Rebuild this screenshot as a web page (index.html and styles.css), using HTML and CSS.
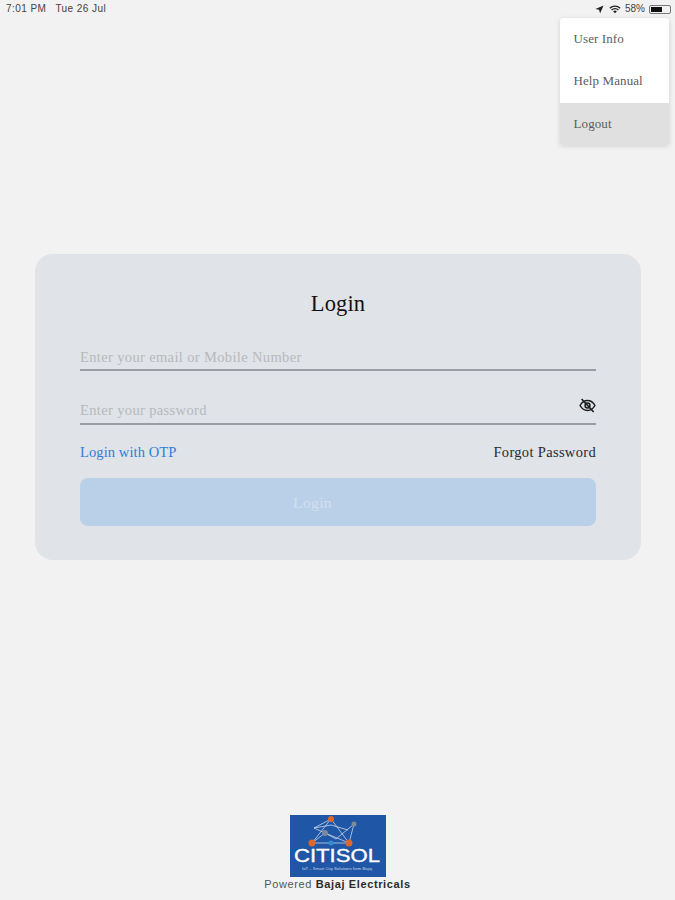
FILE: index.html
```html
<!DOCTYPE html>
<html lang="en">
<head>
<meta charset="utf-8">
<title>Login</title>
<link rel="stylesheet" href="styles.css">
</head>
<body>
<div class="page">
  <header class="status">
    <div class="status-left"><span>7:01 PM</span><span>Tue 26 Jul</span></div>
    <div class="status-right">
      <svg class="ic-loc" viewBox="0 0 10 10"><path d="M9.500.5 5.600 9.500 4.600 5.400.5 4.400z" fill="#222"/></svg>
      <svg class="ic-wifi" viewBox="0 0 14 10"><path d="M1 3.600a8.500 8.500 0 0 1 12 0M3 5.600a5.600 5.600 0 0 1 8 0" fill="none" stroke="#222" stroke-width="1.500"/><path d="M4.900 7.300a3 3 0 0 1 4.200 0L7 9.500z" fill="#222"/></svg>
      <span>58%</span>
      <div class="battery"><div class="battery-fill"></div></div>
    </div>
  </header>

  <nav class="menu">
    <div class="menu-item">User Info</div>
    <div class="menu-item">Help Manual</div>
    <div class="menu-item active">Logout</div>
  </nav>

  <main class="card">
    <h1 class="title">Login</h1>
    <div class="field field-email"><span class="placeholder">Enter your email or Mobile Number</span></div>
    <div class="field field-pass">
      <span class="placeholder">Enter your password</span>
      <svg class="ic-eye" viewBox="0 0 16 16"><path d="M1 8s2.600-4.600 7-4.600S15 8 15 8s-2.600 4.600-7 4.600S1 8 1 8z" fill="none" stroke="#1c1c1c" stroke-width="1.400"/><circle cx="8" cy="8" r="2.300" fill="none" stroke="#1c1c1c" stroke-width="1.400"/><path d="M2.500 1.800 13.800 14.200" stroke="#1c1c1c" stroke-width="1.500"/></svg>
    </div>
    <div class="links">
      <a class="otp">Login with OTP</a>
      <a class="forgot">Forgot Password</a>
    </div>
    <button class="submit" type="button"><span>Login</span></button>
  </main>

  <footer class="footer">
    <svg class="logo" viewBox="0 0 96 62">
      <rect width="96" height="62" fill="#1f56a5"/>
      <g fill="none" stroke="#c9d6ea" stroke-width=".8">
        <path d="M22 28 41 4 59 28 64 9 46 24 35 18 22 28M41 4 24 13 35 18 59 28M22 28H59M24 13 41 10 58 15"/>
      </g>
      <circle cx="41" cy="4" r="3" fill="#e0672c"/>
      <circle cx="22" cy="28" r="3.500" fill="#e0672c"/>
      <circle cx="59" cy="28" r="3.500" fill="#e0672c"/>
      <circle cx="35" cy="18" r="3" fill="#7d8a9c"/>
      <circle cx="64" cy="9" r="2.500" fill="#7d8a9c"/>
      <circle cx="41" cy="28" r="2.500" fill="#2f8fd6"/>
      <text class="logo-name" x="47" y="47" text-anchor="middle" textLength="86" lengthAdjust="spacingAndGlyphs">CITISOL</text>
      <text class="logo-sub" x="47" y="55" text-anchor="middle" textLength="70" lengthAdjust="spacingAndGlyphs">IoT – Smart City Solutions from Bajaj</text>
    </svg>
    <div class="powered">Powered <b>Bajaj Electricals</b></div>
  </footer>
</div>
</body>
</html>
```

FILE: styles.css
```css
* { box-sizing: border-box; }
html, body { margin: 0; height: 100%; }
body { background: #f2f2f2; font-family: "Liberation Serif", serif; color: #1a1a1a; }

.page { position: relative; width: 675px; height: 900px; display: flex; flex-direction: column; overflow: hidden; }

.status {
  height: 18px; padding: 0 4px 0 6px;
  display: flex; justify-content: space-between; align-items: center;
  font: 10px/18px "Liberation Sans", sans-serif; color: #444;
}
.status-left { display: flex; gap: 9px; letter-spacing: .45px; }
.status-right { display: flex; align-items: center; gap: 4px; }
.ic-loc { width: 9px; height: 9px; margin-right: 1px; }
.ic-wifi { width: 12px; height: 9px; }
.battery { width: 22px; height: 9px; border: 1px solid #777; border-radius: 2px; padding: 1px; position: relative; }
.battery-fill { width: 11px; height: 100%; background: #111; }

.menu {
  position: absolute; top: 18px; left: 560px; width: 109px;
  background: #fff; border-radius: 3px 3px 2px 2px; overflow: hidden;
  box-shadow: 0 1px 5px rgba(0, 0, 0, .14);
}
.menu-item { height: 42.300px; padding-left: 13.500px; font-size: 13px; line-height: 42px; color: #5c5c5c; letter-spacing: .1px; }
.menu-item.active { background: #e0e0e0; }

.card {
  margin: 236px 34px 0 35px; height: 306px; padding: 36px 45px 0;
  background: #e0e3e7; border-radius: 18px;
  display: flex; flex-direction: column;
}
.title { margin: 0; text-align: center; font-size: 22.500px; line-height: 28px; font-weight: 400; color: #111; letter-spacing: .15px; }

.field { position: relative; border-bottom: 2px solid #9a9da4; }
.field-email { margin-top: 28px; height: 25px; line-height: 21px; }
.field-pass { margin-top: 28px; height: 26px; line-height: 21px; }
.placeholder { font-size: 14.500px; color: #b6b9be; letter-spacing: .36px; }
.ic-eye { position: absolute; right: 0; top: -2px; width: 17px; height: 17px; }

.links { margin-top: 17px; display: flex; justify-content: space-between; font-size: 14.500px; line-height: 20px; letter-spacing: .36px; }
.otp { color: #2f7ed8; letter-spacing: .1px; }
.forgot { color: #2a2a2a; letter-spacing: .33px; }

.submit {
  margin-top: 16px; height: 48px; width: 100%; padding: 2px 51px 0 0; border: 0; border-radius: 8px;
  background: #b9d0e8; color: #d3e0ee; font: 15.500px "Liberation Serif", serif; letter-spacing: .35px;
}

.footer { margin-top: auto; height: 85px; display: flex; flex-direction: column; align-items: center; }
.logo { width: 96px; height: 62px; display: block; }
.logo-name { font: 400 19px "Liberation Sans", sans-serif; fill: #fff; stroke: #fff; stroke-width: .35px; }
.logo-sub { font: 4px "Liberation Sans", sans-serif; fill: #c6d4ea; }
.powered { margin-top: 0; font: 11px/15px "Liberation Sans", sans-serif; color: #555; letter-spacing: .62px; }
.powered b { color: #2b2b2b; }
```
